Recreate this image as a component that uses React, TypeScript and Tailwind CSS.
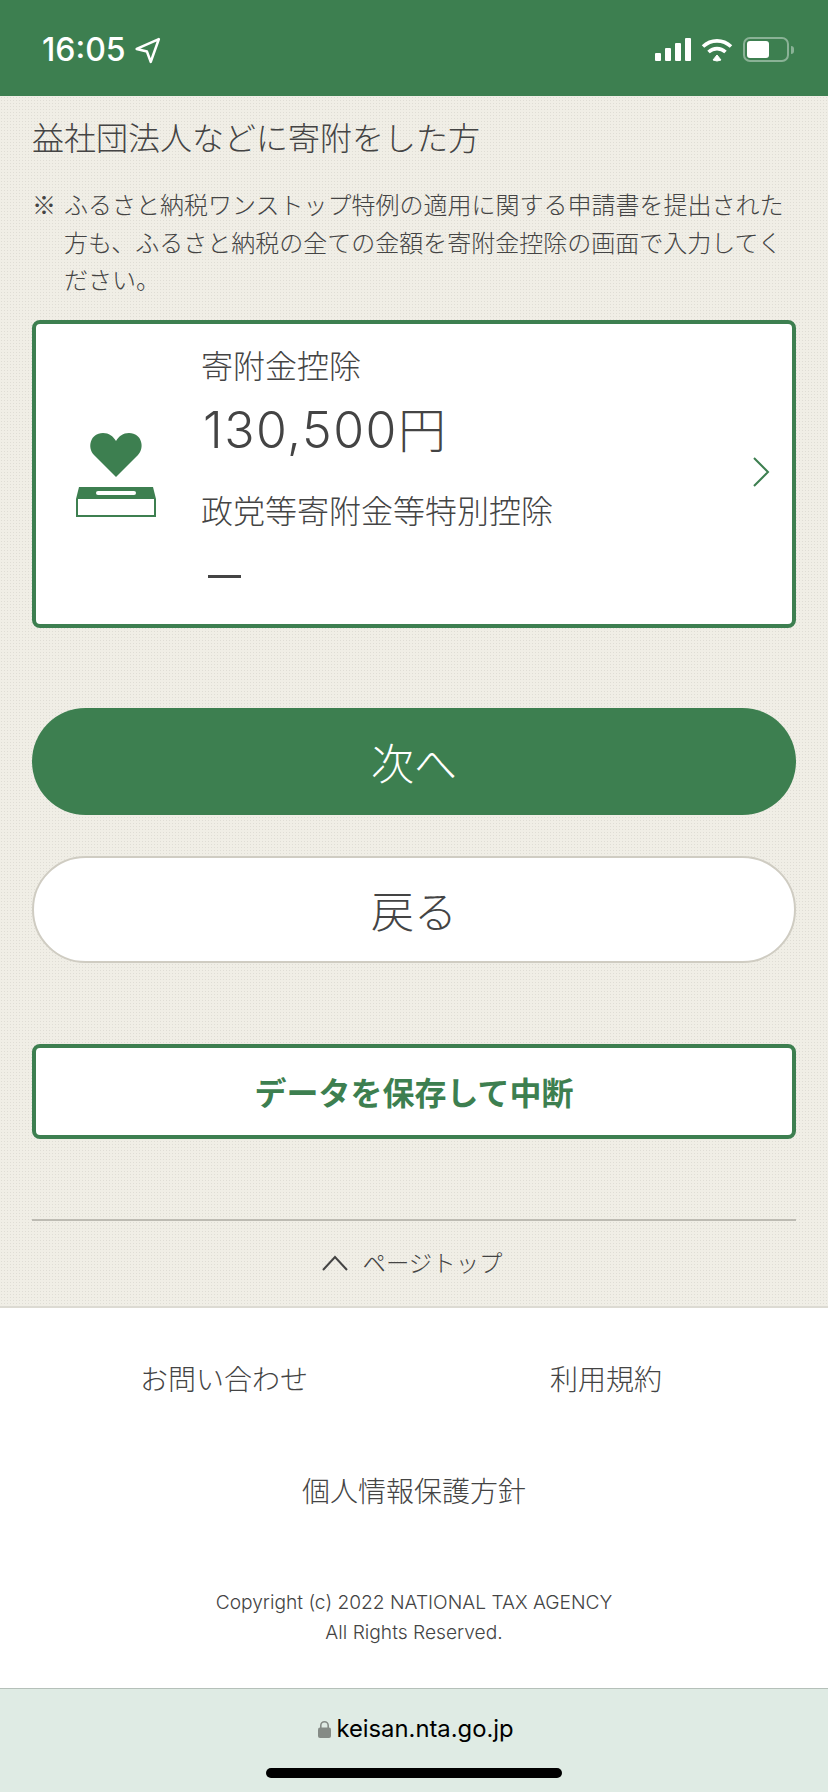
const jp = "font-['Noto_Sans_CJK_JP',sans-serif]"

const StatusBar = () => (
  <div className="h-24 bg-[#3d7f50] flex justify-between items-start pl-[42px] pr-[34px] pt-[34px]">
    <div className="flex items-center gap-2 text-white">
      <span className="text-[32px] leading-[32px] font-medium font-['Inter',sans-serif]">16:05</span>
      <svg width="27" height="27" viewBox="0 0 24 25" fill="none" stroke="white" strokeWidth="2.4" strokeLinejoin="round">
        <path d="M22.5 2 L2 11 L11.5 13.5 L15 23 Z" />
      </svg>
    </div>
    <div className="flex items-center gap-[10px] pt-[3px]">
      <div className="flex items-end gap-[3.5px] h-[23px]">
        <div className="w-[6px] h-[8px] rounded-[1px] bg-white" />
        <div className="w-[6.5px] h-[13px] rounded-[1px] bg-white" />
        <div className="w-[6.5px] h-[18px] rounded-[1px] bg-white" />
        <div className="w-[6.5px] h-[23px] rounded-[1px] bg-white" />
      </div>
      <svg width="32" height="24" viewBox="0 0 32 24" fill="none" stroke="white" strokeWidth="3.6">
        <path d="M2 8.5 C10 1 22 1 30 8.5" />
        <path d="M7.5 14 C12.5 9.5 19.5 9.5 24.5 14" />
        <path d="M12 22 L16 17 L20 22 L16 23 Z" fill="white" strokeWidth="1" />
      </svg>
      <div className="flex items-center gap-[2px]">
        <div className="w-[46px] h-[25px] rounded-[7px] border-2 border-white/40 p-[2px]">
          <div className="w-[22px] h-full rounded-[3px] bg-white" />
        </div>
        <div className="w-[3px] h-[8px] rounded-r bg-white/40" />
      </div>
    </div>
  </div>
)

const DonationIcon = () => (
  <svg width="80" height="84" viewBox="0 0 80 84" className="shrink-0 mt-[2px]">
    <path
      d="M40 44 L18 22 C11 15 14 0 27 0 C33 0 37 3 40 8 C43 3 47 0 53 0 C66 0 69 15 62 22 Z"
      fill="#3d7f50"
    />
    <path d="M3 54 H77 L80 66 V84 H0 V66 Z" fill="#3d7f50" />
    <rect x="2" y="66" width="76" height="16" fill="white" />
    <rect x="20" y="58" width="40" height="4" rx="2" fill="white" />
  </svg>
)

export default function App() {
  return (
    <div className={`${jp} min-h-[1792px] bg-[#f0eee6] text-[#444] flex flex-col`}>
      <StatusBar />
      <main className="flex-1 px-8 bg-[radial-gradient(#dfddd5_0.7px,transparent_0.8px)] bg-[length:3px_3px]">
        <h2 className="text-[32px] leading-[46px] mt-[17px] font-light">益社団法人などに寄附をした方</h2>
        <p className="mt-[26px] text-[24px] leading-[37.5px] pl-8 -indent-8 font-light">
          <span className="inline-block w-8 indent-0">※</span>
          ふるさと納税ワンストップ特例の適用に関する申請書を提出された方も、ふるさと納税の全ての金額を寄附金控除の画面で入力してください。
        </p>
        <a className="mt-[22px] h-[308px] bg-white border-4 border-[#3d7f50] rounded-lg flex items-center pl-10 pr-[21px]">
          <DonationIcon />
          <div className="flex-1 ml-[45px] flex flex-col -mt-1 font-light">
            <span className="text-[32px] leading-[46px]">寄附金控除</span>
            <span className="text-[50px] leading-[60px] mt-[13px] tracking-[1.5px] pl-[2px] font-['Inter','Noto_Sans_CJK_JP',sans-serif]">
              130,500<span className="text-[48px]">円</span>
            </span>
            <span className="text-[32px] leading-[46px] mt-[25px]">政党等寄附金等特別控除</span>
            <span className="block w-[33px] h-[3px] bg-[#444] ml-[7px] mt-[43px] mb-6" />
          </div>
          <svg width="20" height="32" viewBox="0 0 20 32" fill="none" stroke="#3d7f50" strokeWidth="2" className="-mt-1">
            <path d="M3 2 L17 16 L3 30" />
          </svg>
        </a>
        <button className="mt-20 w-full h-[107px] rounded-full bg-[#3d7f50] text-white text-[43px] font-light">次へ</button>
        <button className="mt-[41px] w-full h-[107px] rounded-full bg-white border-2 border-[#cfccc2] text-[43px] font-light">戻る</button>
        <button className="mt-[81px] w-full h-[95px] rounded-lg bg-white border-4 border-[#3d7f50] text-[#3d7f50] text-[32px] font-bold">データを保存して中断</button>
        <div className="mt-[80px] h-[2px] bg-[#bdbbb3]" />
        <a className="h-[84px] flex items-center justify-center gap-[15px] pr-1 text-[23.4px] font-light">
          <svg width="26" height="16" viewBox="0 0 26 16" fill="none" stroke="#444" strokeWidth="2">
            <path d="M1 15 L13 2 L25 15" />
          </svg>
          ページトップ
        </a>
      </main>
      <footer className="bg-white border-t-2 border-[#dcdad2] h-[382px] text-[#444] font-light">
        <div className="grid grid-cols-2 mt-[50px] text-[28px] leading-10 px-8 text-center">
          <a className="pr-[14px] ml-4">お問い合わせ</a>
          <a className="pl-[2px]">利用規約</a>
        </div>
        <div className="mt-[72px] text-[28px] leading-10 text-center">個人情報保護方針</div>
        <div className="mt-[77px] text-[19.2px] leading-[30px] text-center font-['Inter',sans-serif]">
          <div>Copyright (c) 2022 NATIONAL TAX AGENCY</div>
          <div>All Rights Reserved.</div>
        </div>
      </footer>
      <div className="h-[104px] bg-[#dfebe4] border-t border-[#b5c0b9] flex flex-col items-center">
        <div className="mt-[22px] pl-1 flex items-center gap-[5px] text-[23.8px] leading-9 text-black font-['Inter',sans-serif]">
          <svg width="13" height="18" viewBox="0 0 13 18" fill="#858b86">
            <path d="M2 8 V5.5 a4.5 4.5 0 0 1 9 0 V8 H9.4 V5.5 a2.9 2.9 0 0 0 -5.8 0 V8 Z" />
            <rect x="0" y="7.5" width="13" height="10.5" rx="2" />
          </svg>
          keisan.nta.go.jp
        </div>
        <div className="mt-[21px] w-[296px] h-[10px] rounded-full bg-black" />
      </div>
    </div>
  )
}
